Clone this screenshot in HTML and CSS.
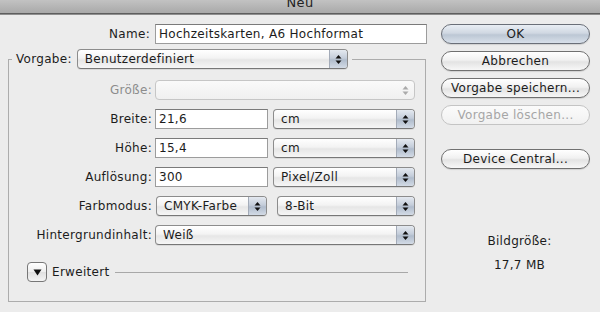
FILE: index.html
```html
<!DOCTYPE html>
<html lang="de">
<head>
    <meta charset="UTF-8">
    <meta name="viewport" content="width=device-width, initial-scale=1.0">
    <title>Neu</title>
    <link rel="stylesheet" href="styles.css">
</head>
<body>
    <div class="titlebar"><span>Neu</span></div>
    <div class="dialog">
        <div class="main">
            <div class="name-row">
                <label>Name:</label>
                <div class="input name-input">Hochzeitskarten, A6 Hochformat</div>
            </div>

            <fieldset class="preset">
                <legend>
                    <label>Vorgabe:</label>
                    <div class="select preset-select">
                        <span class="value">Benutzerdefiniert</span>
                        <span class="arrows"><svg width="7" height="11" viewBox="0 0 7 11"><path d="M3.5 1L6.5 4.5H0.5Z"/><path d="M3.5 10L6.5 6.5H0.5Z"/></svg></span>
                    </div>
                </legend>

                <div class="rows">
                    <label class="disabled">Größe:</label>
                    <div class="select is-disabled">
                        <span class="value"></span>
                        <span class="arrows"><svg width="7" height="11" viewBox="0 0 7 11"><path d="M3.5 1L6.5 4.5H0.5Z"/><path d="M3.5 10L6.5 6.5H0.5Z"/></svg></span>
                    </div>

                    <label>Breite:</label>
                    <div class="pair">
                        <div class="input num-input">21,6</div>
                        <div class="select unit-select">
                            <span class="value">cm</span>
                            <span class="arrows"><svg width="7" height="11" viewBox="0 0 7 11"><path d="M3.5 1L6.5 4.5H0.5Z"/><path d="M3.5 10L6.5 6.5H0.5Z"/></svg></span>
                        </div>
                    </div>

                    <label>Höhe:</label>
                    <div class="pair">
                        <div class="input num-input">15,4</div>
                        <div class="select unit-select">
                            <span class="value">cm</span>
                            <span class="arrows"><svg width="7" height="11" viewBox="0 0 7 11"><path d="M3.5 1L6.5 4.5H0.5Z"/><path d="M3.5 10L6.5 6.5H0.5Z"/></svg></span>
                        </div>
                    </div>

                    <label>Auflösung:</label>
                    <div class="pair">
                        <div class="input num-input">300</div>
                        <div class="select unit-select">
                            <span class="value">Pixel/Zoll</span>
                            <span class="arrows"><svg width="7" height="11" viewBox="0 0 7 11"><path d="M3.5 1L6.5 4.5H0.5Z"/><path d="M3.5 10L6.5 6.5H0.5Z"/></svg></span>
                        </div>
                    </div>

                    <label>Farbmodus:</label>
                    <div class="pair mode-pair">
                        <div class="select mode-select">
                            <span class="value">CMYK-Farbe</span>
                            <span class="arrows"><svg width="7" height="11" viewBox="0 0 7 11"><path d="M3.5 1L6.5 4.5H0.5Z"/><path d="M3.5 10L6.5 6.5H0.5Z"/></svg></span>
                        </div>
                        <div class="select unit-select">
                            <span class="value">8-Bit</span>
                            <span class="arrows"><svg width="7" height="11" viewBox="0 0 7 11"><path d="M3.5 1L6.5 4.5H0.5Z"/><path d="M3.5 10L6.5 6.5H0.5Z"/></svg></span>
                        </div>
                    </div>

                    <label>Hintergrundinhalt:</label>
                    <div class="select">
                        <span class="value">Weiß</span>
                        <span class="arrows"><svg width="7" height="11" viewBox="0 0 7 11"><path d="M3.5 1L6.5 4.5H0.5Z"/><path d="M3.5 10L6.5 6.5H0.5Z"/></svg></span>
                    </div>
                </div>

                <div class="advanced">
                    <span class="disclosure"><svg width="9" height="7" viewBox="0 0 9 7"><path d="M0.5 0.5H8.5L4.5 6.5Z"/></svg></span>
                    <span>Erweitert</span>
                    <span class="rule"></span>
                </div>
            </fieldset>
        </div>

        <div class="side">
            <button class="btn btn-default">OK</button>
            <button class="btn">Abbrechen</button>
            <button class="btn">Vorgabe speichern...</button>
            <button class="btn" disabled>Vorgabe löschen...</button>
            <button class="btn btn-device">Device Central...</button>

            <div class="info">
                <div>Bildgröße:</div>
                <div>17,7 MB</div>
            </div>
        </div>
    </div>
</body>
</html>
```

FILE: styles.css
```css
body {
    font-family: 'DejaVu Sans', 'Liberation Sans', sans-serif;
    font-size: 12px;
    letter-spacing: 0.3px;
    color: #1c1c1c;
    background: #ececec;
    margin: 0;
    width: 600px;
    height: 312px;
    overflow: hidden;
}
.titlebar {
    height: 13px;
    background: linear-gradient(#c2c2c2, #a9a9a9);
    border-bottom: 1px solid #5e5e5e;
    box-shadow: 0 1px 0 #8f8f8f;
    text-align: center;
    overflow: hidden;
}
.titlebar span {
    display: block;
    margin-top: -4px;
    line-height: 14px;
    font-size: 13px;
    color: #222;
}
.dialog {
    display: flex;
    padding-top: 10px;
}
.main {
    width: 427px;
}
label {
    white-space: nowrap;
}
.name-row {
    display: flex;
    align-items: center;
    justify-content: flex-end;
    gap: 5px;
    height: 20px;
}
.input {
    box-sizing: border-box;
    height: 20px;
    background: #fff;
    border: 1px solid #9c9c9c;
    border-top-color: #7a7a7a;
    padding: 0 3px;
    line-height: 18px;
    white-space: nowrap;
    overflow: hidden;
}
.name-input {
    width: 272px;
}
.select {
    box-sizing: border-box;
    height: 20px;
    display: flex;
    align-items: stretch;
    border: 1px solid #8c8c8c;
    border-bottom-color: #777;
    border-radius: 4px;
    background: linear-gradient(#ffffff, #f3f3f3 45%, #e6e6e6 55%, #f6f6f6);
    box-shadow: 0 1px 0 rgba(0, 0, 0, 0.08);
}
.select .value {
    flex: 1;
    padding-left: 7px;
    line-height: 18px;
    white-space: nowrap;
    overflow: hidden;
}
.select .arrows {
    width: 17px;
    display: flex;
    align-items: center;
    justify-content: center;
    border-left: 1px solid #a3abb8;
    border-radius: 0 3px 3px 0;
    background: linear-gradient(#e4e9f0, #c4cdda 45%, #b0bccc 55%, #d3dbe6);
}
.select .arrows svg {
    fill: #111;
}
.select.is-disabled {
    border-color: #c6c6c6;
    background: linear-gradient(#fafafa, #f0f0f0);
    box-shadow: none;
}
.select.is-disabled .arrows {
    background: none;
    border-left: none;
}
.select.is-disabled .arrows svg {
    fill: #aaa;
}
.preset {
    margin: 5px 0 0 8px;
    padding: 0 9px 19px 0;
    width: 418px;
    box-sizing: border-box;
    border: 1px solid #acacac;
    min-inline-size: 0;
}
.preset legend {
    display: flex;
    align-items: center;
    gap: 5px;
    margin-left: 3px;
    padding: 0 4px;
}
.preset-select {
    width: 271px;
}
.rows {
    display: grid;
    grid-template-columns: 143px 260px;
    column-gap: 3px;
    row-gap: 9px;
    align-items: center;
    margin-top: 11px;
}
.rows label {
    text-align: right;
}
.rows label.disabled {
    color: #8c8c8c;
}
.pair {
    display: flex;
    gap: 5px;
}
.num-input {
    width: 113px;
}
.unit-select {
    flex: 1;
}
.mode-pair {
    gap: 10px;
    padding-left: 1px;
}
.mode-select {
    width: 111px;
}
.advanced {
    display: flex;
    align-items: center;
    gap: 5px;
    margin: 17px 8px 0 18px;
    height: 20px;
}
.disclosure {
    box-sizing: border-box;
    width: 20px;
    height: 20px;
    display: flex;
    align-items: center;
    justify-content: center;
    border: 1px solid #777;
    border-radius: 4px;
    background: linear-gradient(#ffffff, #eeeeee 50%, #e0e0e0 51%, #f4f4f4);
}
.disclosure svg {
    fill: #111;
}
.rule {
    flex: 1;
    height: 1px;
    background: #a8a8a8;
    margin-left: 1px;
}
.side {
    display: flex;
    flex-direction: column;
    width: 149px;
    margin-left: 14px;
    gap: 7px;
}
.btn {
    box-sizing: border-box;
    height: 20px;
    font-family: inherit;
    font-size: inherit;
    letter-spacing: inherit;
    color: #1c1c1c;
    border: 1px solid #707070;
    border-radius: 10px;
    background: linear-gradient(#ffffff, #f1f1f1 45%, #e3e3e3 55%, #f7f7f7);
    box-shadow: 0 1px 1px rgba(0, 0, 0, 0.12);
    padding: 0;
    cursor: pointer;
}
.btn-default {
    background: linear-gradient(#e9eef4, #d0d8e2 45%, #bcc7d4 55%, #d8e0ea);
    border-color: #6a6f78;
}
.btn:disabled {
    color: #a6a6a6;
    border-color: #c4c4c4;
    background: linear-gradient(#fbfbfb, #f1f1f1);
    box-shadow: none;
}
.btn-device {
    margin-top: 17px;
}
.info {
    margin-top: 53px;
    text-align: center;
    line-height: 24px;
    padding-left: 8px;
}
```
